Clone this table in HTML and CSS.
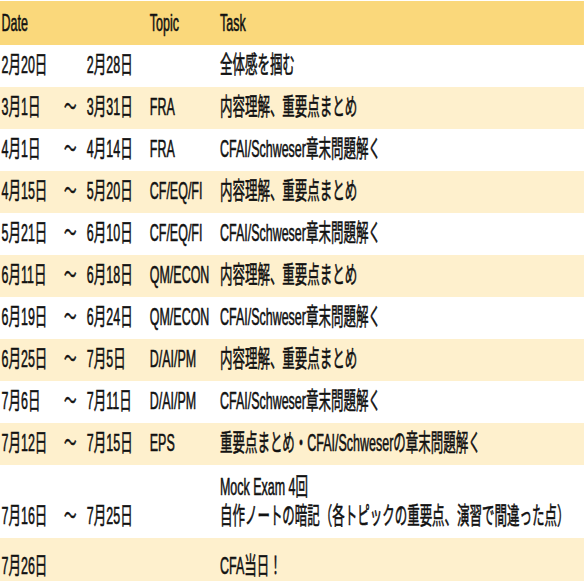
FILE: index.html
```html
<!DOCTYPE html>
<html lang="ja">
<head>
<meta charset="utf-8">
<link rel="stylesheet" href="styles.css">
</head>
<body>
<div class="frame">
<div class="sheet">
  <div class="row head"><div class="c">Date</div><div class="c"></div><div class="c"></div><div class="c">Topic</div><div class="c">Task</div></div>
  <div class="row odd"><div class="c">2月20日</div><div class="c"></div><div class="c">2月28日</div><div class="c"></div><div class="c">全体感を掴む</div></div>
  <div class="row even"><div class="c">3月1日</div><div class="c">～</div><div class="c">3月31日</div><div class="c">FRA</div><div class="c">内容理解、重要点まとめ</div></div>
  <div class="row odd"><div class="c">4月1日</div><div class="c">～</div><div class="c">4月14日</div><div class="c">FRA</div><div class="c">CFAI/Schweser章末問題解く</div></div>
  <div class="row even"><div class="c">4月15日</div><div class="c">～</div><div class="c">5月20日</div><div class="c">CF/EQ/FI</div><div class="c">内容理解、重要点まとめ</div></div>
  <div class="row odd"><div class="c">5月21日</div><div class="c">～</div><div class="c">6月10日</div><div class="c">CF/EQ/FI</div><div class="c">CFAI/Schweser章末問題解く</div></div>
  <div class="row even"><div class="c">6月11日</div><div class="c">～</div><div class="c">6月18日</div><div class="c">QM/ECON</div><div class="c">内容理解、重要点まとめ</div></div>
  <div class="row odd"><div class="c">6月19日</div><div class="c">～</div><div class="c">6月24日</div><div class="c">QM/ECON</div><div class="c">CFAI/Schweser章末問題解く</div></div>
  <div class="row even"><div class="c">6月25日</div><div class="c">～</div><div class="c">7月5日</div><div class="c">D/AI/PM</div><div class="c">内容理解、重要点まとめ</div></div>
  <div class="row odd"><div class="c">7月6日</div><div class="c">～</div><div class="c">7月11日</div><div class="c">D/AI/PM</div><div class="c">CFAI/Schweser章末問題解く</div></div>
  <div class="row even"><div class="c">7月12日</div><div class="c">～</div><div class="c">7月15日</div><div class="c">EPS</div><div class="c">重要点まとめ・CFAI/Schweserの章末問題解く</div></div>
  <div class="row odd tall"><div class="c">7月16日</div><div class="c">～</div><div class="c">7月25日</div><div class="c"></div><div class="c">Mock Exam 4回<br>自作ノートの暗記（各トピックの重要点、演習で間違った点）</div></div>
  <div class="row even last"><div class="c">7月26日</div><div class="c"></div><div class="c"></div><div class="c"></div><div class="c">CFA当日！</div></div>
</div>
</div>
</body>
</html>
```
FILE: styles.css
```css
html, body {
  margin: 0;
  padding: 0;
  background: #ffffff;
  overflow: hidden;
}

body {
  padding-top: 1px;
}

.frame {
  width: 584px;
  height: 583px;
  overflow: hidden;
}

.sheet {
  width: 1123px;
  transform: scaleX(0.52);
  transform-origin: 0 0;
  font-family: "Liberation Sans", "Noto Sans CJK JP", sans-serif;
  font-size: 24px;
  line-height: 29px;
  color: #111111;
  -webkit-text-stroke: 0.6px #111111;
}

.row {
  display: grid;
  grid-template-columns: 120px 44px 121px 135px 1fr;
  height: 42px;
  align-items: end;
}

.row.head {
  height: 44px;
  background: #fad87b;
}

.row.odd {
  background: #ffffff;
}

.row.even {
  background: #fef0cd;
}

.row.tall {
  height: 73px;
}

.row.last {
  height: 43px;
}

.c {
  padding: 0 0 8px 3px;
  white-space: nowrap;
}

.row.last .c {
  padding-bottom: 1px;
}
```
